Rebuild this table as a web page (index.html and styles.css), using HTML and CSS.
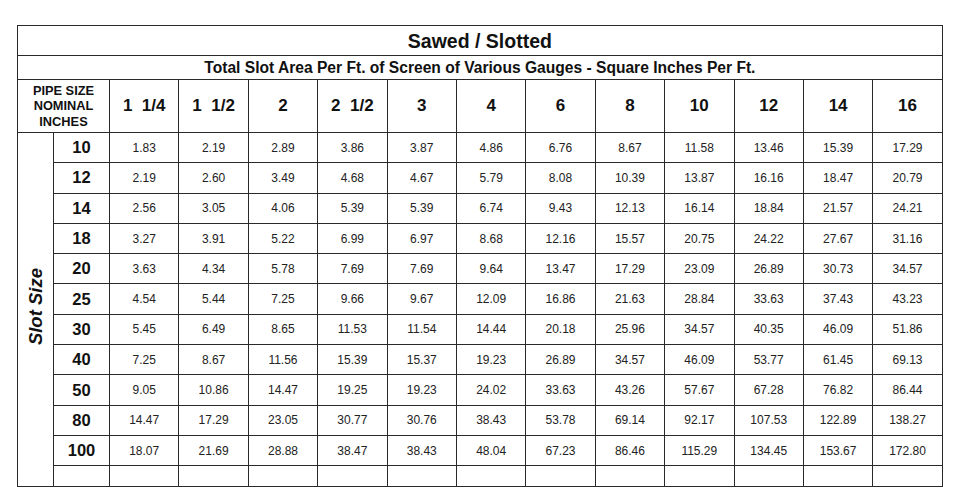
FILE: index.html
```html
<!DOCTYPE html>
<html>
<head>
<meta charset="utf-8">
<link rel="stylesheet" href="styles.css">
</head>
<body>
<div class="wrap">
<table class="chart">
<colgroup>
<col class="c-side"><col class="c-slot">
<col class="c-val"><col class="c-val"><col class="c-val"><col class="c-val"><col class="c-val"><col class="c-val">
<col class="c-val"><col class="c-val"><col class="c-val"><col class="c-val"><col class="c-val"><col class="c-val">
</colgroup>
<tr class="r-title"><td colspan="14" class="title">Sawed / Slotted</td></tr>
<tr class="r-sub"><td colspan="14" class="sub">Total Slot Area Per Ft. of Screen of Various Gauges - Square Inches Per Ft.</td></tr>
<tr class="r-head">
<td colspan="2" class="pipe">PIPE SIZE<br>NOMINAL<br>INCHES</td>
<td class="hd">1&nbsp; 1/4</td><td class="hd">1&nbsp; 1/2</td><td class="hd">2</td><td class="hd">2&nbsp; 1/2</td><td class="hd">3</td><td class="hd">4</td><td class="hd">6</td><td class="hd">8</td><td class="hd">10</td><td class="hd">12</td><td class="hd">14</td><td class="hd">16</td>
</tr>
<tr class="r-data"><td rowspan="12" class="side"><span class="side-text">Slot Size</span></td><td class="slot">10</td><td>1.83</td><td>2.19</td><td>2.89</td><td>3.86</td><td>3.87</td><td>4.86</td><td>6.76</td><td>8.67</td><td>11.58</td><td>13.46</td><td>15.39</td><td>17.29</td></tr>
<tr class="r-data"><td class="slot">12</td><td>2.19</td><td>2.60</td><td>3.49</td><td>4.68</td><td>4.67</td><td>5.79</td><td>8.08</td><td>10.39</td><td>13.87</td><td>16.16</td><td>18.47</td><td>20.79</td></tr>
<tr class="r-data"><td class="slot">14</td><td>2.56</td><td>3.05</td><td>4.06</td><td>5.39</td><td>5.39</td><td>6.74</td><td>9.43</td><td>12.13</td><td>16.14</td><td>18.84</td><td>21.57</td><td>24.21</td></tr>
<tr class="r-data"><td class="slot">18</td><td>3.27</td><td>3.91</td><td>5.22</td><td>6.99</td><td>6.97</td><td>8.68</td><td>12.16</td><td>15.57</td><td>20.75</td><td>24.22</td><td>27.67</td><td>31.16</td></tr>
<tr class="r-data"><td class="slot">20</td><td>3.63</td><td>4.34</td><td>5.78</td><td>7.69</td><td>7.69</td><td>9.64</td><td>13.47</td><td>17.29</td><td>23.09</td><td>26.89</td><td>30.73</td><td>34.57</td></tr>
<tr class="r-data"><td class="slot">25</td><td>4.54</td><td>5.44</td><td>7.25</td><td>9.66</td><td>9.67</td><td>12.09</td><td>16.86</td><td>21.63</td><td>28.84</td><td>33.63</td><td>37.43</td><td>43.23</td></tr>
<tr class="r-data"><td class="slot">30</td><td>5.45</td><td>6.49</td><td>8.65</td><td>11.53</td><td>11.54</td><td>14.44</td><td>20.18</td><td>25.96</td><td>34.57</td><td>40.35</td><td>46.09</td><td>51.86</td></tr>
<tr class="r-data"><td class="slot">40</td><td>7.25</td><td>8.67</td><td>11.56</td><td>15.39</td><td>15.37</td><td>19.23</td><td>26.89</td><td>34.57</td><td>46.09</td><td>53.77</td><td>61.45</td><td>69.13</td></tr>
<tr class="r-data"><td class="slot">50</td><td>9.05</td><td>10.86</td><td>14.47</td><td>19.25</td><td>19.23</td><td>24.02</td><td>33.63</td><td>43.26</td><td>57.67</td><td>67.28</td><td>76.82</td><td>86.44</td></tr>
<tr class="r-data"><td class="slot">80</td><td>14.47</td><td>17.29</td><td>23.05</td><td>30.77</td><td>30.76</td><td>38.43</td><td>53.78</td><td>69.14</td><td>92.17</td><td>107.53</td><td>122.89</td><td>138.27</td></tr>
<tr class="r-data"><td class="slot">100</td><td>18.07</td><td>21.69</td><td>28.88</td><td>38.47</td><td>38.43</td><td>48.04</td><td>67.23</td><td>86.46</td><td>115.29</td><td>134.45</td><td>153.67</td><td>172.80</td></tr>
<tr class="r-empty"><td></td><td></td><td></td><td></td><td></td><td></td><td></td><td></td><td></td><td></td><td></td><td></td><td></td></tr>
</table>
</div>
</body>
</html>
```
FILE: styles.css
```css
html, body {
  margin: 0;
  padding: 0;
  background: #ffffff;
}
.wrap {
  padding: 25px 0 0 17px;
}
.chart {
  border-collapse: collapse;
  table-layout: fixed;
  width: 925px;
  font-family: "Liberation Sans", Arial, sans-serif;
  color: #222;
}
.c-side { width: 36px; }
.c-slot { width: 56px; }
.c-val { width: 69.4px; }
.chart td {
  border: 1px solid #2a2a2a;
  padding: 0;
  text-align: center;
  vertical-align: middle;
  font-size: 12px;
}
.r-title td { height: 28px; }
.r-sub td { height: 23px; }
.r-head td { height: 52px; }
.r-data td { height: 29.3px; }
.r-empty td { height: 20px; }
.chart td.title {
  font-size: 19.5px;
  font-weight: bold;
  color: #111;
  line-height: 22px;
  padding-top: 1px;
}
.chart td.sub {
  font-size: 15.6px;
  font-weight: bold;
  color: #111;
  line-height: 18px;
}
.chart td.pipe {
  font-size: 12.8px;
  font-weight: bold;
  line-height: 15.5px;
  color: #111;
}
.chart td.hd {
  font-size: 17px;
  font-weight: bold;
  color: #111;
  white-space: pre;
}
.chart td.slot {
  font-size: 16.5px;
  font-weight: bold;
  color: #111;
}
.chart td.side {
  vertical-align: middle;
}
.side-text {
  display: inline-block;
  writing-mode: vertical-rl;
  transform: rotate(180deg);
  font-size: 18.5px;
  font-weight: bold;
  font-style: italic;
  color: #111;
  margin-bottom: 4px;
}
```
